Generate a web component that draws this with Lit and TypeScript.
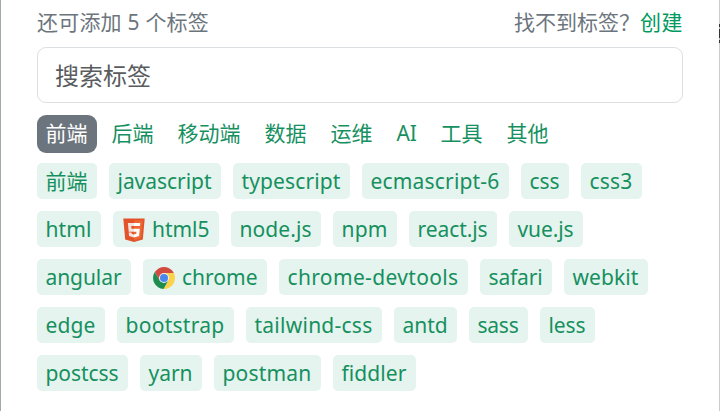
import { LitElement, html, svg, css, nothing } from "lit";
import { customElement, property } from "lit/decorators.js";
import { styleMap } from "lit/directives/style-map.js";

type Item = { label: string; width: number; icon?: "html5" | "chrome" };

const TABS: Item[] = [
  { label: "前端", width: 60 },
  { label: "后端", width: 60 },
  { label: "移动端", width: 81 },
  { label: "数据", width: 60 },
  { label: "运维", width: 60 },
  { label: "AI", width: 38 },
  { label: "工具", width: 60 },
  { label: "其他", width: 60 },
];

const TAGS: Item[][] = [
  [
    { label: "前端", width: 60 },
    { label: "javascript", width: 112 },
    { label: "typescript", width: 117 },
    { label: "ecmascript-6", width: 147 },
    { label: "css", width: 48 },
    { label: "css3", width: 61 },
  ],
  [
    { label: "html", width: 64 },
    { label: "html5", width: 106, icon: "html5" },
    { label: "node.js", width: 90 },
    { label: "npm", width: 64 },
    { label: "react.js", width: 88 },
    { label: "vue.js", width: 74 },
  ],
  [
    { label: "angular", width: 94 },
    { label: "chrome", width: 124, icon: "chrome" },
    { label: "chrome-devtools", width: 189 },
    { label: "safari", width: 72 },
    { label: "webkit", width: 84 },
  ],
  [
    { label: "edge", width: 68 },
    { label: "bootstrap", width: 117 },
    { label: "tailwind-css", width: 136 },
    { label: "antd", width: 63 },
    { label: "sass", width: 59 },
    { label: "less", width: 55 },
  ],
  [
    { label: "postcss", width: 91 },
    { label: "yarn", width: 62 },
    { label: "postman", width: 107 },
    { label: "fiddler", width: 83 },
  ],
];

const ICONS = {
  html5: svg`
    <path fill="#e2522b" d="M.3.500h21.400l-1.900 21L11 24l-8.800-2.500z"/>
    <path fill="#ee6631" d="M11 2.200h8.800l-1.600 17.900L11 22.200z"/>
    <path fill="#f3e3dc" d="M11 5H4.900l.8 8.700H11v-2.900H8.500l-.3-2.900H11zM11 16.500l-2.300-.7-.2-1.400H5.700l.4 3.500 4.900 1.500z"/>
    <path fill="#fff" d="M11 5h6.300l-.3 2.900H11zM11 10.800h5.800l-.7 7.100-5.100 1.500v-2.900l2.300-.7.2-2.100H11z"/>`,
  chrome: svg`
    <path fill="#d34a40" d="M11 12 6.670 14.500 1.800 6.100A11 11 0 0 1 20.800 7H11z"/>
    <path fill="#fdd24b" d="M11 12V7h9.800A11 11 0 0 1 10.500 23l4.830-8.500z"/>
    <path fill="#1d8c4d" d="M11 12 15.330 14.500 10.500 23A11 11 0 0 1 1.800 6.100L6.670 14.500z"/>
    <circle cx="11" cy="12" r="5" fill="#f1f3ee"/>
    <circle cx="11" cy="12" r="4" fill="#4a86ec"/>`,
};

/** A run of text whose tracking is tuned so that it fills its box. */
@customElement("fit-text")
export class FitText extends LitElement {
  @property() text = "";

  static styles = css`
    :host { display: block; flex: 1; min-width: 0; white-space: nowrap; }
    .run { display: inline-block; }
  `;

  async firstUpdated() {
    await document.fonts.ready;
    const run = this.renderRoot.querySelector<HTMLElement>(".run")!;
    const room = this.getBoundingClientRect().width;
    const spacing = (room - run.getBoundingClientRect().width) / this.text.length;
    run.style.letterSpacing = `${spacing}px`;
  }

  render() {
    return html`<span class="run">${this.text}</span>`;
  }
}

@customElement("app-root")
export class AppRoot extends LitElement {
  static styles = css`
    :host {
      display: block;
      box-sizing: border-box;
      position: relative;
      height: 411px;
      padding: 6px 36px 0;
      background: #fff;
      border-left: 1px solid #a3a9aa;
      border-right: 1px solid #c9cbcc;
      font: 300 21px/32px "Noto Sans CJK SC", sans-serif;
      color: #16905f;
    }
    .head { display: flex; justify-content: space-between; height: 41px; color: #6c757d; }
    .left { width: 172px; display: flex; }
    .right { width: 169px; display: flex; }
    .ask { flex: none; width: 126px; display: flex; }
    .create { color: #009a61; width: 43px; flex: none; display: flex; }
    .left, .ask, .create, .tab, .tag {
      font-family: "Noto Sans", "Noto Sans CJK SC", sans-serif;
      font-weight: 400;
    }
    .search {
      box-sizing: border-box;
      width: 646px;
      height: 56px;
      padding: 0 17px 2px;
      border: 1px solid #dcdfe1;
      border-radius: 9px;
      font: 400 24px/53px "Noto Sans CJK SC", sans-serif;
      color: #595c5f;
      outline: 0;
      display: block;
      background: #fff;
    }
    .search::placeholder { color: #595c5f; opacity: 1; }
    .tabs { display: flex; gap: 6px; margin-top: 12px; }
    .tab, .tag {
      box-sizing: border-box;
      display: flex;
      align-items: center;
      flex: none;
      padding: 0 9px;
    }
    .tab { height: 38px; border-radius: 9px; padding: 0 9.500px 2px 8.500px; }
    .active { background: #6c757d; color: #fff; }
    .tags { display: flex; flex-direction: column; gap: 12px; margin-top: 10px; }
    .row { display: flex; gap: 12px; }
    .tag { height: 36px; border-radius: 5px; background: #e5f4ee; padding: 0 9.500px 0 8.500px; }
    .icon { width: 22px; height: 24px; flex: none; margin: 1px 7px 0 1.500px; }
    .mark {
      position: absolute;
      right: -1px;
      top: 24px;
      width: 1px;
      height: 19px;
      background: linear-gradient(#333 0 3px, #bbb 3px 5px, #333 5px 14px, #bbb 14px 16px, #333 16px);
    }
  `;

  private item(i: Item, cls: string) {
    return html`<div class=${cls} style=${styleMap({ width: `${i.width}px` })}>
      ${i.icon ? html`<svg class="icon" viewBox="0 0 22 24">${ICONS[i.icon]}</svg>` : nothing}
      <fit-text .text=${i.label}></fit-text>
    </div>`;
  }

  render() {
    return html`
      <div class="head">
        <div class="left"><fit-text .text=${"还可添加 5 个标签"}></fit-text></div>
        <div class="right">
          <span class="ask"><fit-text .text=${"找不到标签？"}></fit-text></span>
          <span class="create"><fit-text .text=${"创建"}></fit-text></span>
        </div>
      </div>
      <input class="search" placeholder="搜索标签" />
      <div class="tabs">${TABS.map((t, n) => this.item(t, n === 0 ? "tab active" : "tab"))}</div>
      <div class="tags">
        ${TAGS.map((row) => html`<div class="row">${row.map((t) => this.item(t, "tag"))}</div>`)}
      </div>
      <div class="mark"></div>
    `;
  }
}
